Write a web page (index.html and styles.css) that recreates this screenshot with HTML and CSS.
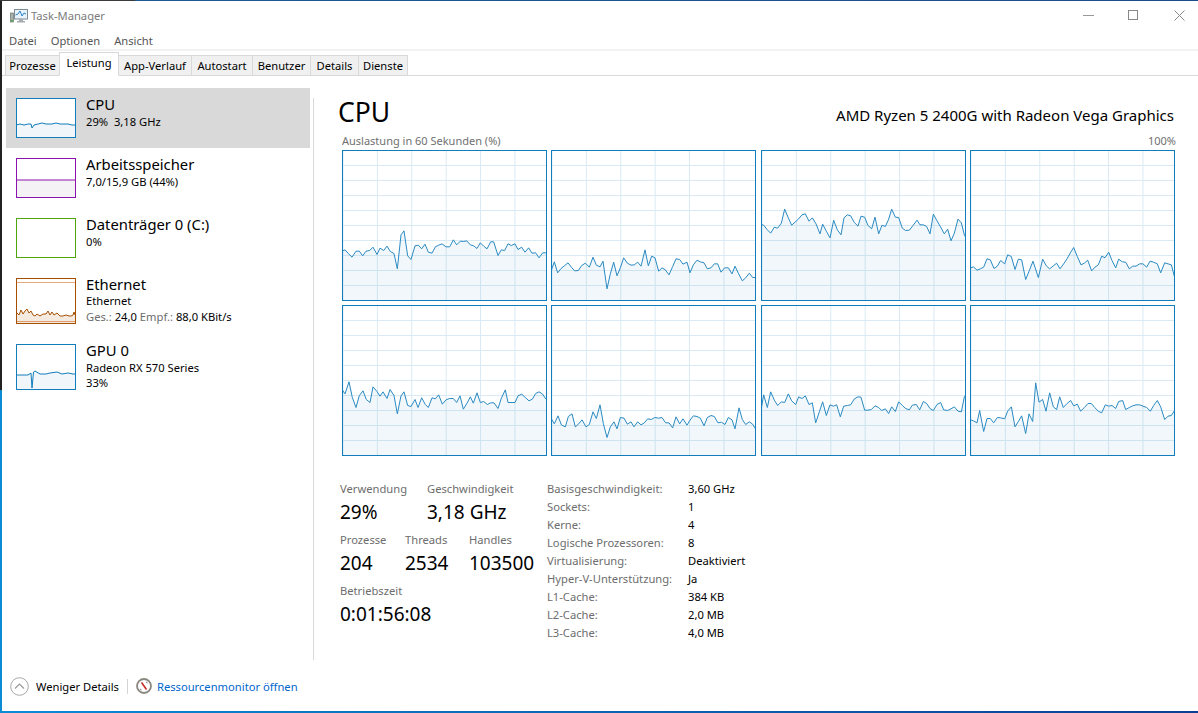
FILE: index.html
```html
<!DOCTYPE html>
<html lang="de">
<head>
<meta charset="utf-8">
<title>Task-Manager</title>
<link rel="stylesheet" href="styles.css">
</head>
<body>
<div class="screen">
<div class="window">
  <header class="titlebar">
    <svg class="app-icon" width="18" height="16" viewBox="0 0 18 16">
      <rect x="0.5" y="5" width="3" height="9" fill="#a9b0a9" stroke="#6f776f" stroke-width="0.7"/>
      <rect x="1" y="12" width="2" height="1.5" fill="#4caf50"/>
      <rect x="4.5" y="1.5" width="13" height="9.5" fill="#e8f4fb" stroke="#7d8b96"/>
      <path d="M5.5 7l2.5-1 2-3 2 5 2-3 2 1" fill="none" stroke="#2c82c4"/>
      <path d="M9 11h4v2h2v1.500H7V13h2z" fill="#a5acb2"/>
    </svg>
    <span class="app-title">Task-Manager</span>
    <div class="win-controls">
      <svg class="ctl-min" width="11" height="11" viewBox="0 0 11 11"><path d="M0 5.500h11" stroke="#999"/></svg>
      <svg class="ctl-max" width="11" height="11" viewBox="0 0 11 11"><rect x="0.500" y="0.500" width="9" height="9" fill="none" stroke="#888"/></svg>
      <svg class="ctl-close" width="11" height="11" viewBox="0 0 11 11"><path d="M0.500 0.500l10 10M10.500 0.500l-10 10" stroke="#888"/></svg>
    </div>
  </header>
  <nav class="menubar"><span>Datei</span><span>Optionen</span><span>Ansicht</span></nav>
  <div class="tabbar">
    <span class="tab t1">Prozesse</span>
    <span class="tab active t2">Leistung</span>
    <span class="tab t3">App-Verlauf</span>
    <span class="tab t4">Autostart</span>
    <span class="tab t5">Benutzer</span>
    <span class="tab t6">Details</span>
    <span class="tab t7">Dienste</span>
  </div>
  <div class="content">
    <aside class="sidebar">
      <div class="item selected">
        <svg class="thumb cpu" width="60" height="40" viewBox="0 0 60 40"><path d="M-2 50V27L0 27 4 26 8 27 12 26 15 26 16 30 18 27 22 26 26 25 30 26 36 26 40 25 44 26 48 26 52 26 56 27 62 27V50Z" class="thumb-cpu-line"/></svg>
        <div class="item-text"><div class="item-title">CPU</div><div class="item-sub">29%&nbsp; 3,18 GHz</div></div>
      </div>
      <div class="item">
        <svg class="thumb mem" width="60" height="40" viewBox="0 0 60 40"><path d="M-2 50V22H62V50Z" class="thumb-mem-line"/></svg>
        <div class="item-text"><div class="item-title">Arbeitsspeicher</div><div class="item-sub">7,0/15,9 GB (44%)</div></div>
      </div>
      <div class="item">
        <svg class="thumb disk" width="60" height="40" viewBox="0 0 60 40"></svg>
        <div class="item-text"><div class="item-title">Datenträger 0 (C:)</div><div class="item-sub">0%</div></div>
      </div>
      <div class="item tall">
        <svg class="thumb net" width="60" height="46" viewBox="0 0 60 46">
          <path d="M0 4.500H60" class="net-top"/>
          <path d="M0 43.500H60" class="net-low"/>
          <path d="M-2 50V36L1 35 3 37 5 32 7 36 9 33 11 31 13 35 15 33 17 37 19 38 21 36 24 38 27 36 30 36 32 33 34 37 36 34 38 37 41 35 44 38 47 38 50 37 53 38 55 38 57 37 58 34 59 37 62 37V50Z" class="net-line"/>
        </svg>
        <div class="item-text"><div class="item-title">Ethernet</div><div class="item-sub net-name">Ethernet</div><div class="item-sub"><span class="muted">Ges.:</span> 24,0 <span class="muted">Empf.:</span> 88,0 KBit/s</div></div>
      </div>
      <div class="item tall">
        <svg class="thumb gpu" width="60" height="46" viewBox="0 0 60 46"><path d="M-2 50V31L5 31 12 31 15 29 16 44 17.500 28 19 27 24 30 30 30 34 29 41 28 46 30 52 29 57 30 62 30V50Z" class="thumb-cpu-line"/></svg>
        <div class="item-text"><div class="item-title">GPU 0</div><div class="item-sub">Radeon RX 570 Series</div><div class="item-sub gpu-pct">33%</div></div>
      </div>
    </aside>
    <main class="main">
      <div class="head"><h1>CPU</h1><div class="model">AMD Ryzen 5 2400G with Radeon Vega Graphics</div></div>
      <div class="chart-label"><span>Auslastung in 60 Sekunden (%)</span><span>100%</span></div>
      <div class="charts">
        <div class="chart"><svg viewBox="13 60 615 450" width="205" height="150"><path class="series" d="M3 530V362L13 362 22 358 33 370 43 380 55 362 65 362 75 376 85 362 96 360 106 350 118 372 127 353 138 360 148 347 158 363 169 369 179 415 190 313 199 301 210 376 220 387 232 346 242 344 252 355 262 341 272 365 283 368 293 349 303 344 313 340 325 349 336 349 347 328 357 343 368 332 378 333 387 331 398 343 408 346 418 354 428 337 438 347 448 355 459 334 468 334 481 375 491 358 501 360 511 340 521 345 532 340 541 357 552 350 562 365 573 352 583 368 594 367 604 382 615 367 640 367V530Z"/></svg></div>
        <div class="chart"><svg viewBox="640 60 615 450" width="205" height="150"><path class="series" d="M630 530V422L640 422 650 394 660 427 670 414 680 406 691 397 701 410 711 421 722 420 732 405 743 398 755 410 766 380 776 404 787 409 796 392 808 475 818 430 828 395 838 436 848 412 858 382 869 398 880 404 890 403 900 395 910 407 922 358 932 406 942 377 952 382 963 422 973 412 983 418 994 433 1005 408 1015 385 1026 387 1036 401 1048 395 1057 427 1067 403 1078 389 1088 394 1099 397 1109 415 1120 412 1130 400 1140 400 1150 425 1161 412 1172 412 1183 430 1192 407 1203 430 1214 451 1224 442 1235 428 1245 441 1265 441V530Z"/></svg></div>
        <div class="chart"><svg viewBox="5 60 615 450" width="205" height="150"><path class="series" d="M-5 530V282L5 282 13 284 24 298 34 308 45 290 55 293 66 278 76 236 87 262 97 284 107 275 118 265 128 253 138 250 149 272 159 262 170 280 182 310 190 281 201 302 212 322 223 269 234 298 245 313 254 262 264 253 274 256 285 276 296 287 305 257 316 260 326 285 337 295 347 260 358 310 368 284 378 288 388 266 397 236 408 260 418 261 429 293 439 300 450 299 461 285 473 269 482 283 492 283 502 288 512 310 522 251 533 271 544 290 555 310 565 296 575 331 585 308 596 266 606 277 615 313 630 340V530Z"/></svg></div>
        <div class="chart"><svg viewBox="632 60 615 450" width="205" height="150"><path class="series" d="M622 530V413L632 413 642 409 653 419 663 415 673 410 683 385 693 388 704 414 714 407 724 390 736 400 745 373 756 378 767 417 777 386 787 388 799 447 810 420 821 392 837 441 850 386 861 406 871 415 882 406 892 398 902 415 913 400 923 385 933 367 943 351 954 378 965 403 975 398 985 389 997 421 1007 410 1017 403 1027 377 1037 382 1048 365 1058 390 1069 412 1078 386 1089 394 1099 395 1110 415 1120 407 1130 407 1141 400 1151 400 1162 410 1172 392 1183 395 1194 400 1204 427 1216 397 1226 400 1236 403 1245 437 1260 460V530Z"/></svg></div>
        <div class="chart"><svg viewBox="13 16 615 450" width="205" height="150"><path class="series" d="M3 490V260L13 268 22 281 34 245 44 292 55 322 65 286 76 272 86 298 97 307 106 260 118 274 127 288 136 275 148 295 157 268 169 286 179 341 190 287 199 275 210 316 220 319 232 298 241 322 252 293 263 313 272 322 283 293 293 296 303 284 314 312 325 299 336 295 347 295 357 307 367 287 377 327 388 309 398 290 407 309 418 278 428 307 438 304 449 313 459 308 469 308 481 325 491 294 503 269 511 307 532 307 541 287 552 282 563 292 574 302 584 297 594 280 604 275 614 281 625 297 640 310V490Z"/></svg></div>
        <div class="chart"><svg viewBox="640 16 615 450" width="205" height="150"><path class="series" d="M630 490V354L640 354 650 371 661 347 671 374 683 380 692 349 703 341 713 380 723 371 733 359 745 380 755 373 766 335 776 355 787 314 797 370 808 412 818 380 829 365 838 386 848 352 859 354 869 372 880 365 889 380 900 365 910 374 920 368 930 356 941 358 951 352 963 354 973 352 984 368 994 368 1005 383 1015 350 1026 371 1036 356 1048 375 1057 360 1067 347 1078 349 1088 354 1099 377 1109 352 1120 346 1130 349 1141 368 1151 366 1162 373 1172 352 1183 359 1192 386 1204 323 1214 358 1224 373 1235 365 1245 372 1253 385 1265 400V490Z"/></svg></div>
        <div class="chart"><svg viewBox="5 16 615 450" width="205" height="150"><path class="series" d="M-5 490V330L5 330 13 284 24 322 34 275 45 300 55 316 66 305 76 307 87 281 97 302 109 313 118 290 128 295 138 287 149 313 159 308 169 368 180 335 190 305 201 346 212 314 222 318 232 314 243 350 253 318 264 316 274 314 285 296 296 290 305 291 316 330 326 330 336 328 347 317 358 322 367 331 378 326 388 340 397 320 408 334 418 305 429 316 439 325 450 329 459 315 471 313 481 329 492 304 502 310 512 325 522 331 533 313 544 307 553 329 565 331 575 326 585 320 596 333 606 335 615 290 630 270V490Z"/></svg></div>
        <div class="chart"><svg viewBox="632 16 615 450" width="205" height="150"><path class="series" d="M622 490V358L632 358 642 362 653 368 661 331 673 394 683 355 693 355 703 368 714 352 724 353 736 356 745 333 756 320 767 380 777 364 787 347 799 400 809 341 820 364 829 248 839 306 850 298 860 333 871 278 882 320 892 328 901 290 912 322 923 310 934 301 943 317 954 312 964 333 975 322 986 310 996 310 1006 322 1017 333 1027 338 1038 314 1048 318 1058 316 1069 325 1078 304 1090 301 1099 328 1110 322 1120 317 1130 314 1141 314 1151 318 1162 322 1173 333 1183 316 1194 301 1204 320 1216 358 1226 348 1236 346 1245 332 1260 320V490Z"/></svg></div>
      </div>
      <section class="stats">
        <div class="live">
          <div class="stat-row">
            <div class="stat w-use"><div class="stat-label">Verwendung</div><div class="stat-value">29%</div></div>
            <div class="stat"><div class="stat-label">Geschwindigkeit</div><div class="stat-value">3,18 GHz</div></div>
          </div>
          <div class="stat-row">
            <div class="stat w-proc"><div class="stat-label">Prozesse</div><div class="stat-value">204</div></div>
            <div class="stat w-thr"><div class="stat-label">Threads</div><div class="stat-value">2534</div></div>
            <div class="stat"><div class="stat-label">Handles</div><div class="stat-value">103500</div></div>
          </div>
          <div class="stat-row">
            <div class="stat"><div class="stat-label">Betriebszeit</div><div class="stat-value">0:01:56:08</div></div>
          </div>
        </div>
        <dl class="specs">
          <dt>Basisgeschwindigkeit:</dt><dd>3,60 GHz</dd>
          <dt>Sockets:</dt><dd>1</dd>
          <dt>Kerne:</dt><dd>4</dd>
          <dt>Logische Prozessoren:</dt><dd>8</dd>
          <dt>Virtualisierung:</dt><dd>Deaktiviert</dd>
          <dt>Hyper-V-Unterstützung:</dt><dd>Ja</dd>
          <dt>L1-Cache:</dt><dd>384 KB</dd>
          <dt>L2-Cache:</dt><dd>2,0 MB</dd>
          <dt>L3-Cache:</dt><dd>4,0 MB</dd>
        </dl>
      </section>
    </main>
  </div>
  <footer class="footer">
    <svg class="less-icon" width="19" height="19" viewBox="0 0 19 19"><circle cx="9.500" cy="9.500" r="8.800" fill="#fff" stroke="#a8a8a8"/><path d="M5 11.500l4.500-4.500 4.500 4.500" fill="none" stroke="#9a9a9a" stroke-width="1.200"/></svg>
    <span class="less">Weniger Details</span>
    <span class="foot-sep"></span>
    <svg class="res-icon" width="16" height="16" viewBox="0 0 16 16"><circle cx="8" cy="8" r="7" fill="#fff" stroke="#8a8780" stroke-width="1.800"/><path d="M5.500 4.500l5 7" stroke="#c8281e" stroke-width="1.500"/><path d="M10 4l1.500 1M4 11l1.500 1" stroke="#777"/></svg>
    <a class="res-link">Ressourcenmonitor öffnen</a>
  </footer>
</div>
</div>
</body>
</html>
```
FILE: styles.css
```css
* { box-sizing: border-box; }
html, body { margin: 0; height: 100%; overflow: hidden; }
body { font-family: "Noto Sans", "Open Sans", sans-serif; font-size: 11.200px; color: #000; background: #fff; }

.screen {
  width: 1198px;
  height: 713px;
  padding: 1px 0 2px 2px;
  background:
    linear-gradient(90deg, #3a3a3a 135px, #1c5a96 135px, #1c4b8c) top / 100% 1px no-repeat,
    linear-gradient(#222 390px, #0a8bd6 390px) left / 2px 100% no-repeat,
    linear-gradient(90deg, #0a8bd6, #0c3f94) bottom / 100% 2px no-repeat,
    #fff;
}
.window { height: 100%; background: #fff; display: flex; flex-direction: column; }

/* title bar */
.titlebar { height: 30px; flex: none; display: flex; align-items: center; padding-left: 8px; }
.app-icon { flex: none; margin-right: 3px; }
.app-title { color: #7c7c7c; margin-top: -2px; }
.win-controls { margin-left: auto; display: flex; align-items: center; padding-right: 13px; margin-top: -2px; }
.ctl-max { margin-left: 34px; }
.ctl-close { margin-left: 35px; }

/* menu */
.menubar { height: 20px; flex: none; display: flex; gap: 14px; align-items: center; padding: 0 0 0 7px; color: #555; border-bottom: 2px solid #f2f2f2; }

/* tabs */
.tabbar { height: 25px; flex: none; display: flex; align-items: flex-end; padding: 0 0 0 3px; border-bottom: 1px solid #d9d9d9; }
.tab { height: 21px; margin-left: -1px; margin-bottom: -1px; padding-bottom: 1px; display: flex; align-items: center; justify-content: center; background: #f0f0f0; border: 1px solid #d9d9d9; color: #000; flex: none; }
.tab.active { height: 24px; background: #fff; border-bottom-color: #fff; padding-bottom: 4px; position: relative; }
.t1 { width: 55px; margin-left: 0; }
.t2 { width: 60px; }
.t3 { width: 74px; }
.t4 { width: 62px; }
.t5 { width: 59px; }
.t6 { width: 49px; }
.t7 { width: 50px; }

/* layout */
.content { flex: 1; display: flex; min-height: 0; }
.sidebar { width: 311px; flex: none; padding: 12px 3px 0 4px; }
.item { height: 60px; display: flex; padding: 10px 0 0 10px; }
.item.tall { height: 66px; }
.item.selected { background: #d9d9d9; }
.thumb { flex: none; background: #fff; outline: 1px solid; outline-offset: -1px; display: block; }
.thumb.cpu, .thumb.gpu { outline-color: #117dbb; }
.thumb.mem { outline-color: #8b12ae; }
.thumb.disk { outline-color: #4da60c; }
.thumb.net { outline-color: #a74f01; }
.thumb-cpu-line { fill: #f1f6fa; stroke: #117dbb; stroke-width: 1; }
.thumb-mem-line { fill: #f4f2f4; stroke: #8b12ae; stroke-width: 1; }
.net-top { stroke: #e5a97c; fill: none; }
.net-low { stroke: #e5a97c; fill: none; }
.net-line { fill: rgba(167, 79, 1, .12); stroke: #a74f01; stroke-width: 1; }
.item-text { margin-left: 10px; margin-top: -4px; }
.item-title { font-size: 14.800px; line-height: 20px; }
.item-sub { line-height: 16px; white-space: nowrap; }
.net-name { margin-top: -1px; }
.gpu-pct { margin-top: -1px; }
.muted { color: #6d6d6d; }

/* main */
.main { flex: 1; min-width: 0; margin: 22px 0 5px; border-left: 1px solid #d9d9d9; padding: 0 22px 0 24px; }
.head { height: 33px; margin-top: -3px; display: flex; justify-content: space-between; align-items: flex-end; }
h1 { margin: 0; font-size: 26.500px; font-weight: 400; line-height: 32px; }
.model { font-size: 15px; line-height: 20px; margin-right: 2px; padding-bottom: 3px; }
.chart-label { height: 16px; margin: 4px 0 2px 4px; display: flex; justify-content: space-between; align-items: center; color: #707070; font-size: 11px; }
.charts { margin-left: 3.500px; display: grid; grid-template-columns: repeat(4, 205px); column-gap: 4.500px; row-gap: 4px; }
.chart {
  height: 151px;
  outline: 1px solid #117dbb;
  outline-offset: -1px;
  background-color: #fff;
  background-image:
    linear-gradient(#d9eaf4 1px, transparent 1px),
    linear-gradient(90deg, #d9eaf4 1px, transparent 1px);
  background-size: 100% 15px, 34.400px 100%;
  background-position: 0 0, 0.500px 0;
}
.chart svg { display: block; height: 151px; }
.series { fill: rgba(17, 125, 187, .06); stroke: #2a8ac2; stroke-width: 3; stroke-linejoin: round; }

/* stats */
.stats { margin: 25px 0 0 2px; display: flex; }
.live { width: 207px; flex: none; display: flex; flex-direction: column; gap: 6px; }
.stat-row { display: flex; }
.w-use { width: 87px; }
.w-proc { width: 65px; }
.w-thr { width: 64px; }
.stat-label { color: #6d6d6d; line-height: 16px; margin-bottom: 2px; }
.stat-value { font-size: 19px; line-height: 27px; white-space: nowrap; }
.specs { margin: -2px 0 0; display: grid; grid-template-columns: 141px auto; grid-auto-rows: 18px; align-items: center; }
.specs dt { color: #6d6d6d; }
.specs dd { margin: 0; }

/* footer */
.footer { height: 46px; flex: none; display: flex; align-items: center; padding: 0 0 4px 8px; }
.less { margin-left: 7px; }
.foot-sep { width: 1px; height: 15px; background: #d4d4d4; margin: 0 8px; }
.res-icon { margin-right: 5px; flex: none; }
.res-link { color: #0066cc; }
```
